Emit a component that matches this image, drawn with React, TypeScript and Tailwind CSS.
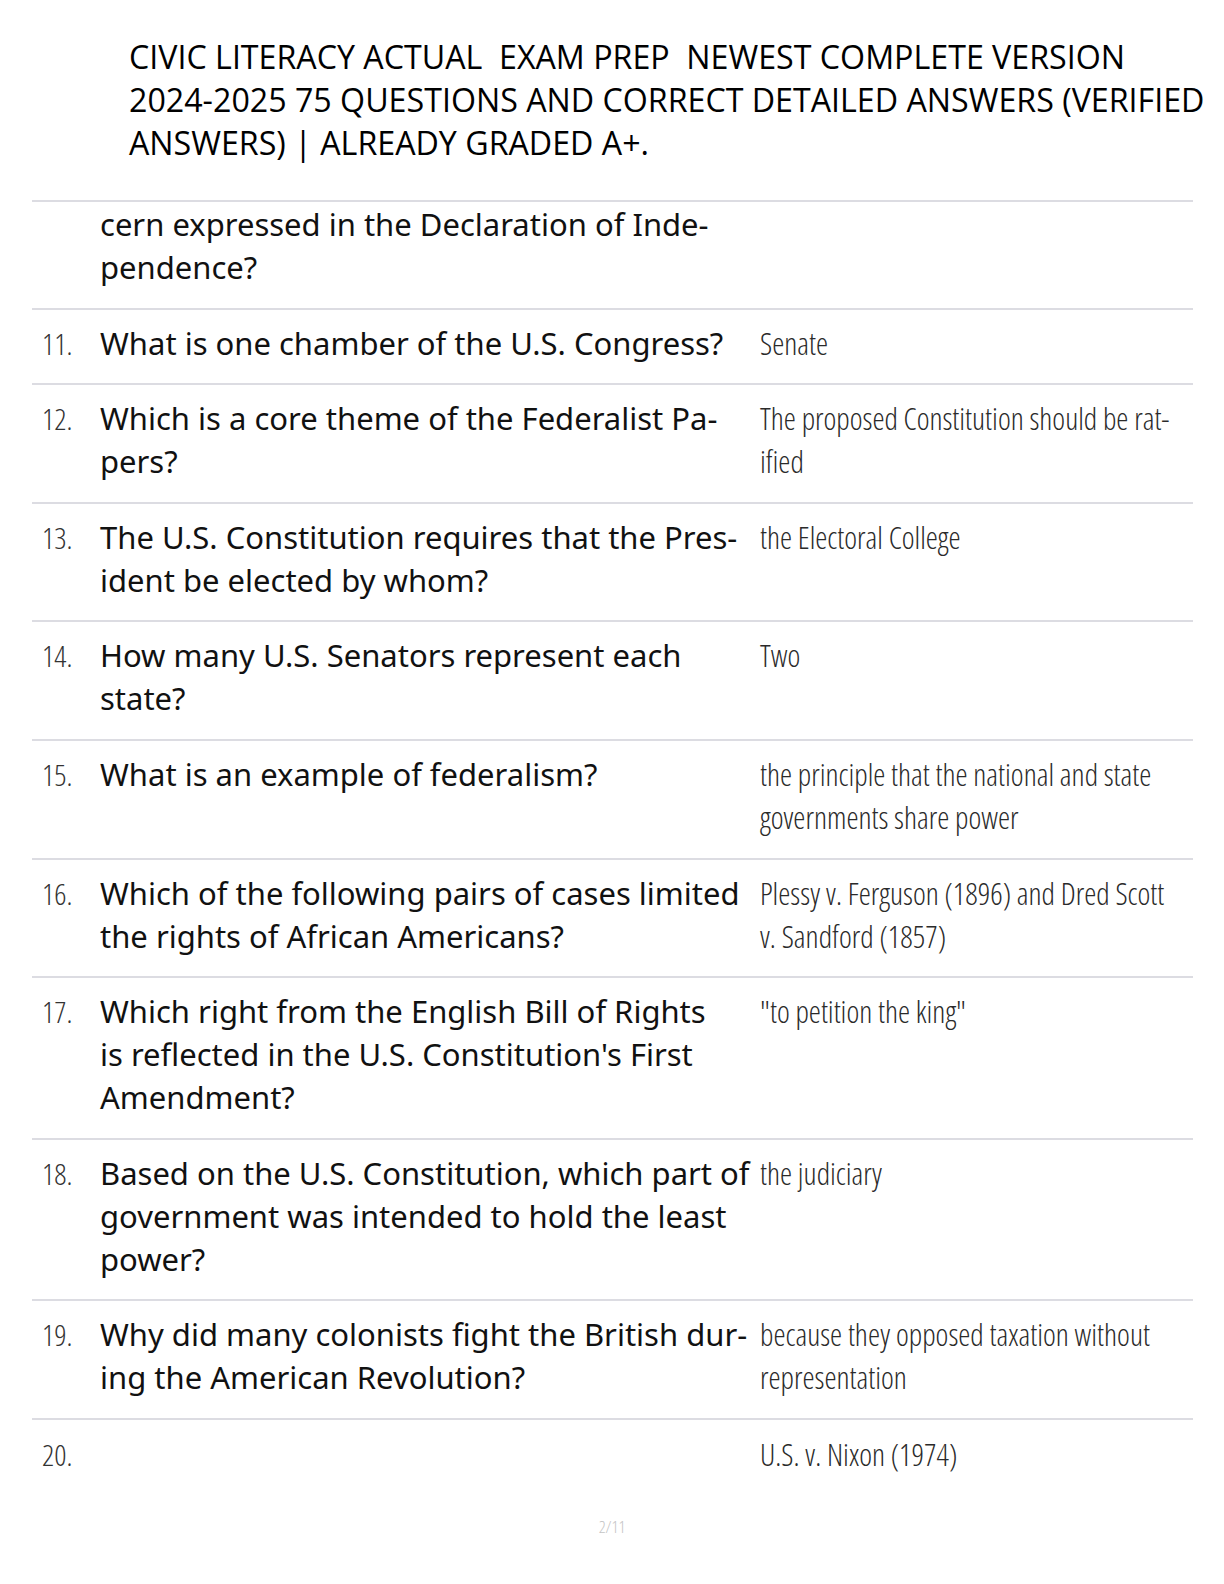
const rows: { n: string; q: string[]; a: string[] }[] = [
  { n: "", q: ["cern expressed in the Declaration of Inde-", "pendence?"], a: [] },
  { n: "11.", q: ["What is one chamber of the U.S. Congress?"], a: ["Senate"] },
  { n: "12.", q: ["Which is a core theme of the Federalist Pa-", "pers?"], a: ["The proposed Constitution should be rat-", "ified"] },
  { n: "13.", q: ["The U.S. Constitution requires that the Pres-", "ident be elected by whom?"], a: ["the Electoral College"] },
  { n: "14.", q: ["How many U.S. Senators represent each", "state?"], a: ["Two"] },
  { n: "15.", q: ["What is an example of federalism?"], a: ["the principle that the national and state", "governments share power"] },
  { n: "16.", q: ["Which of the following pairs of cases limited", "the rights of African Americans?"], a: ["Plessy v. Ferguson (1896) and Dred Scott", "v. Sandford (1857)"] },
  { n: "17.", q: ["Which right from the English Bill of Rights", "is reflected in the U.S. Constitution's First", "Amendment?"], a: ['"to petition the king"'] },
  { n: "18.", q: ["Based on the U.S. Constitution, which part of", "government was intended to hold the least", "power?"], a: ["the judiciary"] },
  { n: "19.", q: ["Why did many colonists fight the British dur-", "ing the American Revolution?"], a: ["because they opposed taxation without", "representation"] },
  { n: "20.", q: [], a: ["U.S. v. Nixon (1974)"] },
];

// answers and numbers: condensed light face
const cond = "font-['Open_Sans',sans-serif] font-light [font-stretch:75%]";

export default function App() {
  return (
    <div className="w-[1224px] h-[1584px] bg-white flex flex-col font-['Noto_Sans','Open_Sans',sans-serif]">
      <header className="pl-[129px] pr-2 pt-[35px] pb-[36px] text-[32.2px] leading-[43px] text-black font-['Open_Sans',sans-serif]">
        <p className="whitespace-nowrap">CIVIC LITERACY ACTUAL&nbsp; EXAM PREP&nbsp; NEWEST COMPLETE VERSION</p>
        <p className="whitespace-nowrap">2024-2025 75 QUESTIONS AND CORRECT DETAILED ANSWERS (VERIFIED</p>
        <p className="whitespace-nowrap">ANSWERS) | ALREADY GRADED A+.</p>
      </header>

      <div className="ml-[32px] w-[1161px] border-t-2 border-[#dcdce2]">
        {rows.map((r, i) => {
          const last = i === rows.length - 1;
          return (
            <div
              key={i}
              className={`flex border-[#dcdce2] ${last ? "pt-[13px]" : "border-b-2 pb-[18.6px]"} ${i === 0 ? "pt-[1px]" : last ? "" : "pt-[12px]"}`}
            >
              <div className={`w-[68px] pl-[10px] text-[30px] leading-[43px] text-[#333] ${cond}`}>{r.n}</div>
              <div className="w-[660px] text-[31px] leading-[43px] text-[#111]">
                {r.q.map((l, j) => (
                  <p key={j} className="whitespace-nowrap">{l}</p>
                ))}
              </div>
              <div className={`flex-1 text-[30.6px] leading-[43px] text-[#2a2a2a] ${cond}`}>
                {r.a.map((l, j) => (
                  <p key={j} className="whitespace-nowrap">{l}</p>
                ))}
              </div>
            </div>
          );
        })}
      </div>

      <div className={`mt-[38px] text-center text-[17px] text-[#c4c4c4] ${cond}`}>2/11</div>
    </div>
  );
}
